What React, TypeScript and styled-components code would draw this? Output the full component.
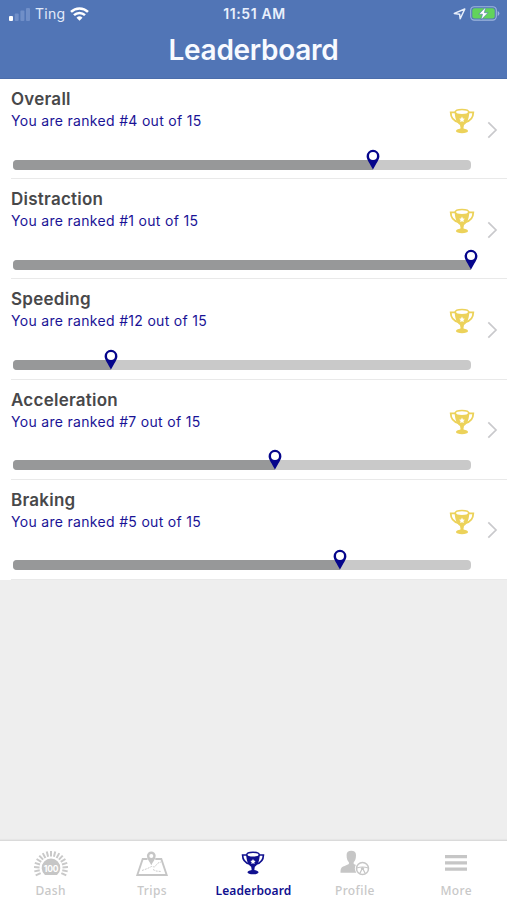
import React from "react";
import styled, { createGlobalStyle } from "styled-components";

const GlobalStyle = createGlobalStyle`
  * { box-sizing: border-box; }
  body { margin: 0; background: #eeeeee; font-family: Inter, "Liberation Sans", sans-serif; }
`;

const Screen = styled.div`
  display: flex;
  flex-direction: column;
  width: 100%;
  height: 100vh;
  overflow: hidden;
  background: #eeeeee;
`;

const Header = styled.header`
  flex: none;
  height: 79px;
  background: #5175b6;
  border-bottom: 1px solid #4b6dab;
  color: #f8faff;
`;

const StatusBar = styled.div`
  display: grid;
  grid-template-columns: 1fr auto 1fr;
  height: 27px;
  padding: 0 7px 0 9px;
  align-items: center;
`;

const Carrier = styled.div`
  display: flex;
  align-items: center;
  font-size: 14px;
  color: #e3ebfa;
  svg { display: block; }
  span { margin: 0 5px 0 5px; letter-spacing: 0.25px; }
`;

const Clock = styled.div`
  font-size: 14px;
  font-weight: 600;
  letter-spacing: 0.6px;
  color: #e9f0fc;
`;

const StatusIcons = styled.div`
  display: flex;
  justify-content: flex-end;
  align-items: center;
  gap: 4px;
  svg { display: block; }
`;

const Title = styled.h1`
  margin: 4px 0 0;
  font-size: 28px;
  line-height: 38px;
  font-weight: 600;
  letter-spacing: -0.3px;
  text-align: center;
`;

const List = styled.main`
  flex: none;
  background: #fff;
`;

const Row = styled.section`
  display: grid;
  grid-template-columns: 460px 1fr;
  height: 100.2px;
  margin-left: 11px;
  border-bottom: 1px solid #e9e9e9;
`;

const RowBody = styled.div`
  display: flex;
  flex-direction: column;
`;

const RowTop = styled.div`
  display: flex;
  justify-content: space-between;
  height: 80.6px;
  margin-right: -3.500px;
  padding-top: 10.100px;
`;

const RowName = styled.h2`
  margin: 0;
  font-size: 17px;
  line-height: 21px;
  font-weight: 600;
  letter-spacing: 0.25px;
  color: #48484a;
`;

const RowRank = styled.p`
  margin: 1px 0 0;
  font-size: 14px;
  line-height: 20px;
  letter-spacing: 0.31px;
  color: #1a1396;
`;

const TrophyBox = styled.div`
  padding-top: 18.900px;
  svg { display: block; }
`;

const ChevronBox = styled.div`
  padding: 41.500px 0 0 16px;
  svg { display: block; }
`;

const Track = styled.div`
  position: relative;
  height: 10px;
  width: 458px;
  margin-left: 2px;
  border-radius: 4px;
  background: #c9c9c9;
`;

const Fill = styled.div`
  height: 100%;
  border-radius: 4px 0 0 4px;
  background: #979899;
`;

const Pin = styled.svg`
  position: absolute;
  top: -11px;
  width: 14px;
  height: 21px;
  transform: translateX(-50%);
`;

const TabBar = styled.nav`
  display: grid;
  grid-template-columns: repeat(5, 1fr);
  flex: none;
  height: 60px;
  margin-top: auto;
  background: #fff;
  border-top: 1px solid #dadada;
  box-shadow: 0 -1px 1px #e6e6e6;
`;

const Tab = styled.div<{ $active?: boolean }>`
  display: flex;
  flex-direction: column;
  align-items: center;
  padding-top: 7px;
  color: ${(p) => (p.$active ? "#10108f" : "#c8c8c8")};
  font-family: "Noto Sans", "Open Sans", sans-serif;
  font-size: 12px;
  font-weight: ${(p) => (p.$active ? 600 : 500)};
  line-height: 16px;
  letter-spacing: ${(p) => (p.$active ? "0.1px" : "0.4px")};
`;

const TabIcon = styled.div`
  display: flex;
  flex: none;
  align-items: center;
  justify-content: center;
  height: 30px;
  margin: 0 0 5px;
  svg { display: block; }
`;

const Trophy = ({ color, size = 26 }: { color: string; size?: number }) => (
  <svg width={size} height={size} viewBox="0 0 26 26" fill="none" stroke={color}>
    <path d="M6.500 4.300H1.700c.1 5.400 3 8.700 7.800 9.800M19.500 4.300h4.800c-.1 5.400-3 8.700-7.800 9.800" strokeWidth="1.800" />
    <path d="M5.600 3.500C6 9.500 7 14.500 11 17l.5 2.800h3L15 17c4-2.500 5-7.500 5.400-13.500Z" fill={color} stroke="none" />
    <ellipse cx="13" cy="4.100" rx="6.700" ry="2.700" fill="#fff" strokeWidth="1.500" />
    <path d="m13 8.600.9 1.800 2 .3-1.450 1.400.35 2L13 13.150l-1.800.95.35-2L10.100 10.700l2-.3Z" fill="#fff" stroke="none" />
    <path d="M12 19h2l1 2.500h-4Z" fill={color} stroke="none" />
    <ellipse cx="13" cy="22.900" rx="6" ry="2.300" fill={color} stroke="none" />
  </svg>
);

const MapPin = ({ percent }: { percent: number }) => (
  <Pin viewBox="0 0 14 21" style={{ left: `${percent}%` }}>
    <path d="M7 .8A6.400 6.400 0 0 0 .6 7.200C.6 10.500 4 14.500 7 20.500c3-6 6.400-10 6.400-13.300A6.400 6.400 0 0 0 7 .8Z" fill="#05058b" />
    <circle cx="7" cy="7" r="4" fill="#fff" />
  </Pin>
);

const SignalIcon = () => (
  <svg width="21" height="14" viewBox="0 0 21 14">
    <rect x="0" y="9" width="4" height="5" rx="1" fill="#fff" />
    <rect x="5.700" y="6.500" width="4" height="7.500" rx="1" fill="#708fc8" />
    <rect x="11.400" y="3.500" width="4" height="10.500" rx="1" fill="#708fc8" />
    <rect x="17" y="1" width="4" height="13" rx="1" fill="#708fc8" />
  </svg>
);

const WifiIcon = () => (
  <svg width="19" height="14" viewBox="0 0 19 14" fill="none" stroke="#fff" strokeWidth="2.500">
    <path d="M1 4.900a12.200 12.200 0 0 1 17 0M4 8.200a7.800 7.800 0 0 1 11 0" />
    <path d="M9.500 13.800 6.500 10.800a4.300 4.300 0 0 1 6 0Z" fill="#fff" stroke="none" />
  </svg>
);

const LocationIcon = () => (
  <svg width="13" height="12" viewBox="0 0 13 12" fill="none" stroke="#e8effb" strokeWidth="1.500" strokeLinejoin="round">
    <path d="M11.800 1 7.200 10.800 6.600 6.200 1.300 5.400Z" />
  </svg>
);

const BatteryIcon = () => (
  <svg width="30" height="15" viewBox="0 0 30 15">
    <rect x=".7" y=".7" width="25.600" height="13.400" rx="3.600" fill="none" stroke="#9fb6de" strokeWidth="1.100" />
    <rect x="2.300" y="2.300" width="22.400" height="10.200" rx="2.200" fill="#62d35b" />
    <path d="M27.700 5v5q1.700-.8 1.700-2.500T27.700 5Z" fill="#9fb6de" />
    <path d="m15.800 1-7 7.200h3.700L11 14l7-7.300h-3.700Z" fill="#fff" stroke="#5175b6" strokeWidth=".6" />
  </svg>
);

const Chevron = () => (
  <svg width="11" height="18" viewBox="0 0 11 18" fill="none" stroke="#c9c9cc" strokeWidth="1.700">
    <path d="m1.300 1.300 7.700 7.700-7.700 7.700" />
  </svg>
);

const spokes = Array.from({ length: 17 }, (_, i) => -116 + i * 14.5);

const DashIcon = () => (
  <svg width="36" height="30" viewBox="0 0 36 30">
    <g stroke="#c9c9c9" strokeWidth="2">
      {spokes.map((a) => (
        <path key={a} d="M18 8.500V3" transform={`rotate(${a} 18 20)`} />
      ))}
    </g>
    <path d="M12 27a9.300 9.300 0 1 1 12 0Z" fill="#c6c6c6" />
    <text x="18" y="23.800" textAnchor="middle" fontFamily="Inter, sans-serif" fontSize="8.500" fontWeight="700" letterSpacing="-.2" fill="#fff">100</text>
  </svg>
);

const TripsIcon = () => (
  <svg width="34" height="30" viewBox="0 0 34 30" fill="none" stroke="#c6c6c6">
    <path d="M12.500 11H7.700L2.300 27h29.400L26.300 11h-6" strokeWidth="1.900" />
    <path d="m7 22.500 5.500-2 4-2 3 .5 3.500-4 3-1M18 21.500l3 1.500 5 .5" strokeWidth=".9" strokeDasharray="2 1" />
    <path d="M16.300 17.300c-1.500-3.500-4.400-6.200-4.400-9.500a4.400 4.400 0 0 1 8.800 0c0 3.300-2.900 6-4.400 9.500Z" fill="#c6c6c6" stroke="none" />
    <circle cx="16.300" cy="7.900" r="2" fill="#fff" stroke="none" />
  </svg>
);

const ProfileIcon = () => (
  <svg width="30" height="30" viewBox="0 0 30 30" fill="none">
    <path d="M6.600 7c0-3 1.800-4.300 4.700-4.300S16 4 16 7c0 3.500-.8 6-2.300 7.300V16l6 2.500-3.400 6.200H.5c0-4.300.8-5.700 3.500-6.500L8.900 16v-1.700C7.400 13 6.600 10.500 6.600 7Z" fill="#c6c6c6" />
    <circle cx="22.500" cy="20.500" r="7.600" fill="#fff" />
    <circle cx="22.500" cy="20.500" r="6" stroke="#c6c6c6" strokeWidth="1.500" />
    <path d="M16.800 20q5.700-2 11.400 0M22 21l-2.200 4.500M23 21l2.200 4.500" stroke="#c6c6c6" strokeWidth="1.200" />
    <circle cx="22.500" cy="20.500" r="1.600" fill="#c6c6c6" />
  </svg>
);

const MoreIcon = () => (
  <svg width="24" height="30" viewBox="0 0 24 30" fill="#c6c6c6">
    <path d="M1 7h22v3.300H1zM1 13.200h22v3.300H1zM1 19.400h22v3.300H1z" />
  </svg>
);

const TOTAL = 15;
const categories = [
  { name: "Overall", rank: 4 },
  { name: "Distraction", rank: 1 },
  { name: "Speeding", rank: 12 },
  { name: "Acceleration", rank: 7 },
  { name: "Braking", rank: 5 },
];

const tabs = [
  { label: "Dash", icon: <DashIcon /> },
  { label: "Trips", icon: <TripsIcon /> },
  { label: "Leaderboard", icon: <Trophy color="#10108f" size={24} />, active: true },
  { label: "Profile", icon: <ProfileIcon /> },
  { label: "More", icon: <MoreIcon /> },
];

export default function App() {
  return (
    <>
      <GlobalStyle />
      <Screen>
        <Header>
          <StatusBar>
            <Carrier>
              <SignalIcon />
              <span>Ting</span>
              <WifiIcon />
            </Carrier>
            <Clock>11:51 AM</Clock>
            <StatusIcons>
              <LocationIcon />
              <BatteryIcon />
            </StatusIcons>
          </StatusBar>
          <Title>Leaderboard</Title>
        </Header>
        <List>
          {categories.map(({ name, rank }) => {
            const percent = ((TOTAL - rank) / (TOTAL - 1)) * 100;
            return (
              <Row key={name}>
                <RowBody>
                  <RowTop>
                    <div>
                      <RowName>{name}</RowName>
                      <RowRank>{`You are ranked #${rank} out of ${TOTAL}`}</RowRank>
                    </div>
                    <TrophyBox>
                      <Trophy color="#ecd25a" />
                    </TrophyBox>
                  </RowTop>
                  <Track>
                    <Fill style={{ width: `${percent}%` }} />
                    <MapPin percent={percent} />
                  </Track>
                </RowBody>
                <ChevronBox>
                  <Chevron />
                </ChevronBox>
              </Row>
            );
          })}
        </List>
        <TabBar>
          {tabs.map(({ label, icon, active }) => (
            <Tab key={label} $active={active}>
              <TabIcon>{icon}</TabIcon>
              {label}
            </Tab>
          ))}
        </TabBar>
      </Screen>
    </>
  );
}
